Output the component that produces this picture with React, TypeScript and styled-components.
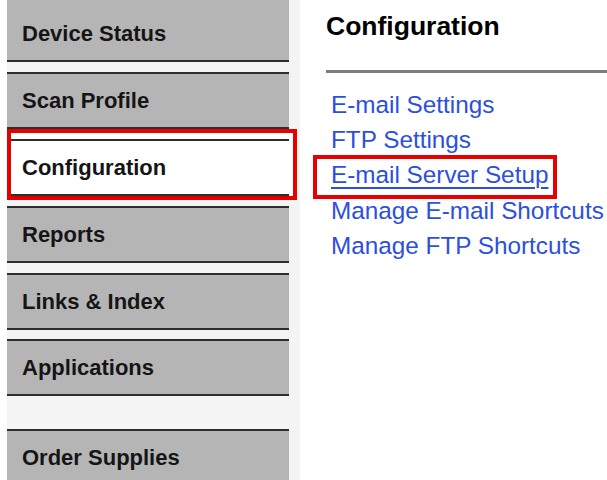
import styled, { createGlobalStyle } from "styled-components";

const GlobalStyle = createGlobalStyle`
  html, body {
    margin: 0;
    padding: 0;
    background: #ffffff;
  }
  body {
    font-family: "Liberation Sans", Arial, sans-serif;
  }
`;

const Page = styled.div`
  display: flex;
  height: 480px;
  overflow: hidden;
  padding-left: 7px;
`;

const SideNav = styled.nav`
  width: 293px;
  flex: none;
  box-sizing: border-box;
  padding-right: 11px;
  background: #f4f4f4;
  display: flex;
  flex-direction: column;
`;

const NavItem = styled.div<{ $first?: boolean; $top?: number; $active?: boolean; $indent?: number }>`
  flex: none;
  box-sizing: border-box;
  height: ${(p) => (p.$first ? 62 : 57)}px;
  margin-top: ${(p) => p.$top ?? 0}px;
  padding: ${(p) => (p.$first ? "8px" : "0")} 0 0 ${(p) => p.$indent ?? 15}px;
  border-top: ${(p) => (p.$first ? "none" : "2px solid #2e2e2e")};
  border-bottom: 2px solid #2e2e2e;
  background: ${(p) => (p.$active ? "#ffffff" : "#b5b5b5")};
  display: flex;
  align-items: center;
  font-size: 22px;
  font-weight: bold;
  color: #151515;
  white-space: nowrap;
`;

/* red frame drawn round the selected menu entry */
const Marked = styled.div`
  flex: none;
  box-sizing: border-box;
  margin-right: -8px;
  padding: 6px 4px 0 0;
  border: 4px solid #e60000;
  background: #ffffff;
`;

const Main = styled.main`
  flex: 1;
  min-width: 0;
  padding: 11px 0 0 26px;
  background: #ffffff;
`;

const Heading = styled.h1`
  margin: 0 0 29px;
  font-size: 26.5px;
  line-height: 30px;
  font-weight: bold;
  color: #000000;
`;

const Rule = styled.hr`
  margin: 0;
  height: 3px;
  border: 0;
  background: #7d7d7d;
`;

const LinkList = styled.ul`
  list-style: none;
  margin: 14px 0 0;
  padding: 0 0 0 5px;
`;

const LinkItem = styled.li`
  font-size: 24.3px;
  line-height: 35.2px;
  white-space: nowrap;
`;

const MenuLink = styled.a<{ $marked?: boolean }>`
  position: relative;
  display: inline-block;
  color: #2c4fe0;
  text-decoration: ${(p) => (p.$marked ? "underline" : "none")};
  text-decoration-thickness: 2px;
  text-underline-offset: 4px;
  cursor: pointer;

  ${(p) =>
    p.$marked &&
    `
    &::after {
      content: "";
      position: absolute;
      left: -18px;
      right: -9px;
      top: -2px;
      bottom: -6px;
      border: 4px solid #e60000;
    }
  `}
`;

const menu = [
  { label: "Device Status", top: 0 },
  { label: "Scan Profile", top: 10 },
  { label: "Configuration", active: true },
  { label: "Reports", top: 6 },
  { label: "Links & Index", top: 10 },
  { label: "Applications", top: 9 },
  { label: "Order Supplies", top: 33 },
];

const links = [
  { label: "E-mail Settings" },
  { label: "FTP Settings" },
  { label: "E-mail Server Setup", marked: true },
  { label: "Manage E-mail Shortcuts" },
  { label: "Manage FTP Shortcuts" },
];

const App = () => {
  return (
    <>
      <GlobalStyle />
      <Page>
        <SideNav>
          {menu.map((item, i) =>
            item.active ? (
              <Marked key={item.label}>
                <NavItem $active $indent={11}>
                  {item.label}
                </NavItem>
              </Marked>
            ) : (
              <NavItem key={item.label} $first={i === 0} $top={item.top}>
                {item.label}
              </NavItem>
            )
          )}
        </SideNav>
        <Main>
          <Heading>Configuration</Heading>
          <Rule />
          <LinkList>
            {links.map((link) => (
              <LinkItem key={link.label}>
                <MenuLink $marked={link.marked}>{link.label}</MenuLink>
              </LinkItem>
            ))}
          </LinkList>
        </Main>
      </Page>
    </>
  );
};

export default App;
